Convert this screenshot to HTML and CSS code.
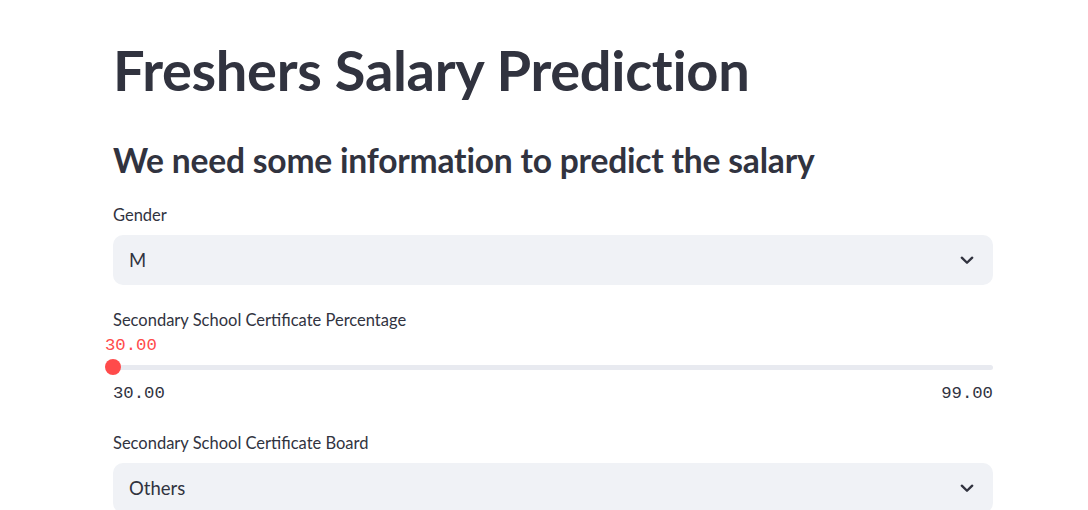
FILE: index.html
```html
<!DOCTYPE html>
<html>
<head>
<meta charset="utf-8">
<link rel="stylesheet" href="styles.css">
</head>
<body>
<main class="main">
  <h1 class="title">Freshers Salary Prediction</h1>
  <h2 class="subtitle">We need some information to predict the salary</h2>

  <div class="field">
    <label class="label">Gender</label>
    <div class="select">
      <span class="select-value">M</span>
      <svg class="chevron" viewBox="0 0 24 24" width="22" height="22"><path d="M6.3 9.5 L12 15 L17.7 9.5" fill="none" stroke="#31333f" stroke-width="2.6" stroke-linecap="round" stroke-linejoin="round"/></svg>
    </div>
  </div>

  <div class="field slider-field">
    <label class="label">Secondary School Certificate Percentage</label>
    <div class="slider">
      <div class="slider-value-row"></div>
      <div class="track-row">
        <div class="track"></div>
        <div class="thumb"><span class="thumb-value">30.00</span></div>
      </div>
      <div class="ticks"><span>30.00</span><span>99.00</span></div>
    </div>
  </div>

  <div class="field board">
    <label class="label">Secondary School Certificate Board</label>
    <div class="select">
      <span class="select-value">Others</span>
      <svg class="chevron" viewBox="0 0 24 24" width="22" height="22"><path d="M6.3 9.5 L12 15 L17.7 9.5" fill="none" stroke="#31333f" stroke-width="2.6" stroke-linecap="round" stroke-linejoin="round"/></svg>
    </div>
  </div>
</main>
</body>
</html>
```

FILE: styles.css
```css
* { box-sizing: border-box; }
html, body { margin: 0; padding: 0; background: #ffffff; }
body {
  font-family: "Lato", "Noto Sans", sans-serif;
  color: #31333f;
  overflow: hidden;
}
.main {
  width: 880px;
  margin-left: 113px;
  display: flex;
  flex-direction: column;
}
.title {
  margin: 35px 0 0;
  font-size: 56px;
  line-height: 70px;
  font-weight: 700;
  letter-spacing: -0.3px;
}
.subtitle {
  margin: 35px 0 0;
  font-size: 33.6px;
  line-height: 40px;
  font-weight: 700;
  letter-spacing: -0.2px;
}
.field { display: flex; flex-direction: column; margin-top: 23px; }
.board { margin-top: 27px; }
.label {
  font-size: 16.5px;
  line-height: 24px;
  height: 24px;
}
.select {
  margin-top: 8px;
  height: 50px;
  background: #f0f2f6;
  border-radius: 10px;
  display: flex;
  align-items: center;
  justify-content: space-between;
  padding: 0 16px;
}
.select-value { font-size: 18.5px; }
.chevron { margin-right: -1px; }
.slider { display: flex; flex-direction: column; }
.slider-value-row { height: 23px; }
.track-row {
  position: relative;
  height: 24px;
  display: flex;
  align-items: center;
}
.track {
  width: 100%;
  height: 5px;
  border-radius: 3px;
  background: #e8eaf0;
}
.thumb {
  position: absolute;
  left: -8px;
  top: 4px;
  width: 16px;
  height: 16px;
  border-radius: 50%;
  background: #ff4b4b;
}
.thumb-value {
  position: absolute;
  left: 0;
  top: -32px;
  transform: translateY(9px);
  font-family: "Liberation Mono", "DejaVu Sans Mono", monospace;
  font-size: 17.3px;
  line-height: 20px;
  color: #ff4b4b;
}
.ticks {
  margin-top: 5px;
  display: flex;
  justify-content: space-between;
  font-family: "Liberation Mono", "DejaVu Sans Mono", monospace;
  font-size: 17.3px;
  line-height: 20px;
  color: #31333f;
}
```
